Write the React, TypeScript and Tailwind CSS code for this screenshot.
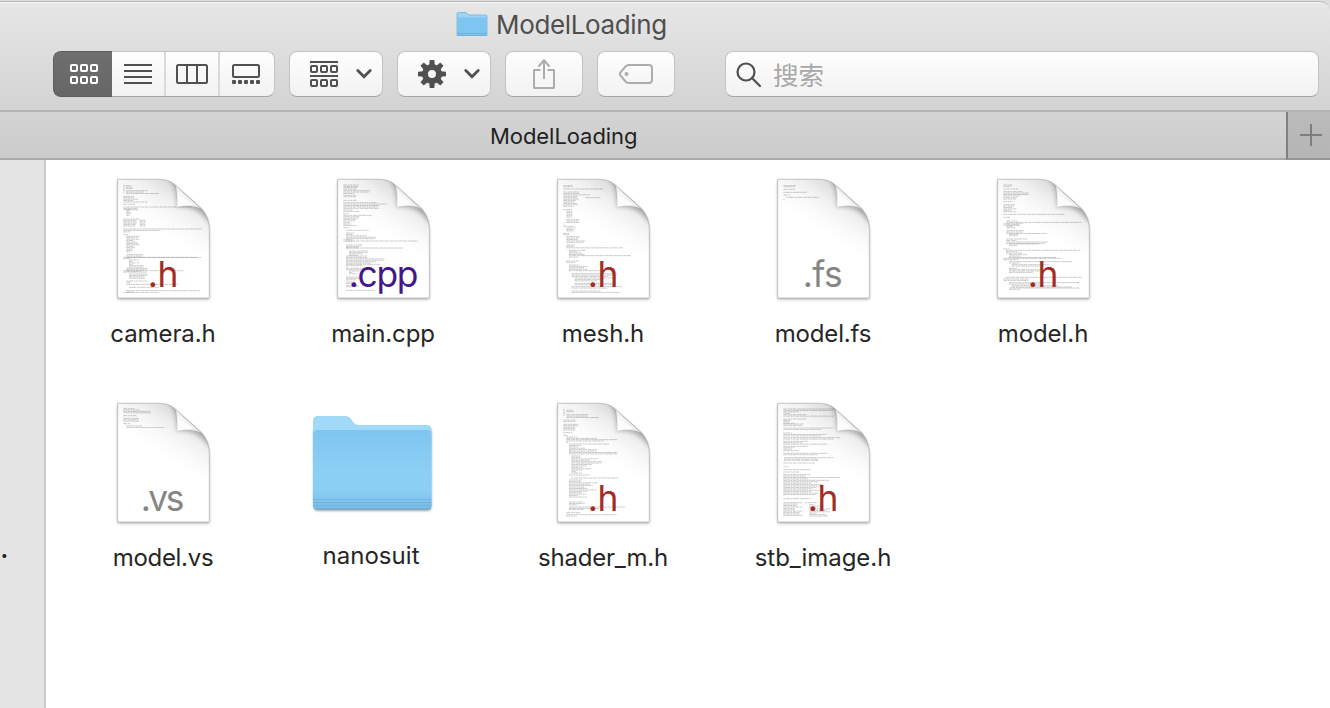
import React from "react";

type Block = [number, number, ...number[]];

interface Entry {
  name: string;
  ext?: string;
  color?: string;
  extX?: number;
  extWidth?: number;
  tracking: string;
  blocks?: Block[];
}

const RED = "#a32c26";
const GRAY = "#858585";

// Each block: first baseline, left edge, then the right edge of every row.
const camera: Block[] = [
  [46, 70, 74, 74, 74, 74, 74, 74], [47, 78, 92, 98, 98], [62, 78, 143, 131, 178],
  [79, 70, 102, 102, 114, 100, 142], [103, 70, 105], [111, 70, 275, 113, 115], [119, 79, 95, 89, 94, 94, 88],
  [147, 70, 118], [151, 70, 110, 110, 110, 108, 105], [151, 119, 136, 138, 136, 136, 136],
  [177, 70, 305, 181, 92], [194, 70, 84], [199, 79, 120, 111, 118, 102, 110, 115, 118, 103, 105, 98, 97, 92],
  [254, 79, 131, 128, 303], [262, 70, 290, 94], [270, 87, 117, 97, 118, 98, 131, 131],
  [295, 79, 143, 140, 124], [302, 70, 250, 140], [312, 87, 144, 141, 133, 135], [333, 79, 140, 92], [343, 79, 235], [352, 87, 178],
  [362, 79, 300, 103], [368, 70, 178],
];
const mainCpp: Block[] = [
  [45, 70, 116, 115], [53, 70, 112, 111], [62, 70, 150, 148, 103], [76, 70, 109, 108], [91, 70, 110],
  [98, 70, 170, 203, 178, 173, 178], [120, 70, 97, 117], [131, 70, 85], [136, 70, 157, 118, 115, 108, 104], [158, 70, 89, 94, 110], [173, 70, 89],
  [181, 78, 146], [189, 78, 103, 98, 140, 170, 166], [209, 70, 99, 98], [213, 79, 294],
  [225, 78, 127, 121, 116], [234, 78, 250], [243, 87, 144, 142, 128, 112], [258, 78, 140, 142, 194, 191, 167, 152],
  [283, 78, 184, 127], [295, 78, 140, 136], [303, 87, 118, 97, 113], [321, 78, 120, 123, 108], [336, 78, 105, 100], [346, 78, 116, 112], [361, 78, 165],
];
const mesh: Block[] = [
  [46, 70, 99, 98], [57, 70, 190], [66, 70, 118, 117, 149], [79, 70, 112, 113, 116, 107, 102, 112, 112, 100],
  [83, 136, 181], [119, 70, 99], [124, 79, 97, 96, 99], [137, 79, 96, 96], [149, 79, 119, 116, 119], [162, 70, 74],
  [169, 70, 102], [174, 79, 109, 101, 103], [190, 70, 89, 88], [200, 79, 119, 116, 112, 137, 132], [225, 79, 104, 103, 249],
  [241, 87, 138, 112], [249, 87, 125, 134], [257, 87, 272, 116], [273, 79, 116, 106], [285, 87, 117, 142, 132, 142],
  [302, 87, 178], [311, 95, 230, 230, 204], [324, 104, 231, 190, 170], [340, 104, 228, 222], [350, 95, 245, 202], [363, 95, 181, 241],
];
const modelFs: Block[] = [[46, 70, 107], [50, 70, 107], [58, 70, 105], [67, 70, 140], [75, 70, 91], [82, 79, 176], [88, 70, 74]];
const modelH: Block[] = [
  [45, 70, 98, 95], [57, 70, 115], [65, 70, 129, 146, 147, 120], [83, 70, 110, 108], [95, 70, 97], [104, 70, 104, 102, 98, 109, 95, 109],
  [133, 70, 255], [142, 70, 92], [153, 79, 112, 304], [161, 70, 129, 120], [165, 79, 118, 98, 109], [182, 79, 134, 129, 200], [193, 87, 116, 115],
  [207, 79, 144, 109], [216, 79, 202, 193], [222, 87, 178, 112], [237, 70, 87], [241, 78, 300, 112, 128], [254, 87, 141, 121, 230],
  [265, 70, 245, 116], [275, 87, 277, 118], [284, 95, 208, 180], [295, 87, 112, 187], [303, 87, 180, 160],
  [322, 78, 305], [327, 70, 148, 145], [338, 87, 300, 185], [347, 95, 235, 275], [354, 87, 300, 120],
];
const modelVs: Block[] = [[44, 70, 104], [48, 70, 121, 151, 153], [65, 70, 109], [73, 70, 115, 116, 117], [89, 70, 91], [96, 79, 126], [101, 79, 194]];
const shader: Block[] = [
  [46, 70, 74, 74, 74, 74, 74], [49, 79, 98, 102], [62, 79, 145, 141, 176], [78, 70, 109, 106], [91, 70, 115, 114, 105, 104, 106], [116, 70, 99], [124, 70, 84],
  [129, 79, 111, 170], [137, 79, 231], [141, 79, 192, 85], [150, 87, 207, 124, 114, 136, 170, 170, 232, 231], [186, 94, 124, 120, 174, 150, 188, 183, 155, 140, 125, 154, 126, 108, 126],
  [243, 87, 149], [252, 94, 235], [258, 87, 125, 122, 174, 151, 160, 133, 142, 171, 143, 125, 138, 115, 140],
  [324, 87, 128, 136, 113], [339, 87, 255, 178], [346, 87, 130], [356, 79, 122], [362, 79, 230], [366, 79, 110],
];
const stb: Block[] = [
  [45, 70, 225, 218, 116], [58, 70, 90, 140, 220], [75, 70, 138, 92, 88, 104], [90, 70, 131, 128], [102, 70, 218, 184],
  [117, 70, 95, 200, 184], [131, 70, 241, 220], [142, 70, 143, 129, 204], [157, 70, 145, 102, 95, 115], [178, 70, 204, 174],
  [191, 72, 220, 174], [199, 72, 176], [207, 70, 165], [218, 70, 85], [227, 70, 151], [234, 70, 117],
  [242, 70, 151, 137, 242, 143, 207, 176, 153, 187, 186, 170, 158, 185, 153, 176, 168], [314, 70, 155],
  [326, 70, 127, 113, 110, 128, 104, 106, 128, 119, 120, 127], [326, 135, 172], [332, 148, 164, 190, 166, 214, 200, 212, 170, 200, 204],
];

const rowOne: Entry[] = [
  { name: "camera.h", ext: ".h", color: RED, extX: 143, extWidth: 92, tracking: "tracking-[-0.08px]", blocks: camera },
  { name: "main.cpp", ext: ".cpp", color: "#431787", extX: 86, extWidth: 209, tracking: "tracking-[-0.1px]", blocks: mainCpp },
  { name: "mesh.h", ext: ".h", color: RED, extX: 143, extWidth: 92, tracking: "tracking-[-0.1px]", blocks: mesh },
  { name: "model.fs", ext: ".fs", color: GRAY, extX: 128, extWidth: 120, tracking: "tracking-[-0.15px]", blocks: modelFs },
  { name: "model.h", ext: ".h", color: RED, extX: 143, extWidth: 92, tracking: "tracking-[-0.05px]", blocks: modelH },
];
const rowTwo: Entry[] = [
  { name: "model.vs", ext: ".vs", color: GRAY, extX: 122, extWidth: 131, tracking: "tracking-[-0.3px]", blocks: modelVs },
  { name: "nanosuit", tracking: "tracking-[0.05px]" },
  { name: "shader_m.h", ext: ".h", color: RED, extX: 143, extWidth: 92, tracking: "tracking-[-0.2px]", blocks: shader },
  { name: "stb_image.h", ext: ".h", color: RED, extX: 143, extWidth: 92, tracking: "tracking-[-0.05px]", blocks: stb },
];

const SHEET = "M53 28H178C204 28 218 38 232 51L298 110C316 126 328 148 328 182V384H53Z";

function DocumentIcon({ entry, id }: { entry: Entry; id: string }) {
  return (
    <svg width="96" height="128" viewBox="48 24 288 384" className="block overflow-visible">
      <defs>
        <linearGradient id={`${id}-sheet`} gradientUnits="userSpaceOnUse" x1="262" y1="78" x2="190" y2="188">
          <stop offset="0" stopColor="#dedede" />
          <stop offset="0.3" stopColor="#efefef" />
          <stop offset="0.65" stopColor="#fafafa" />
          <stop offset="1" stopColor="#ffffff" />
        </linearGradient>
        <linearGradient id={`${id}-fold`} gradientUnits="userSpaceOnUse" x1="230" y1="112" x2="264" y2="76">
          <stop offset="0" stopColor="#ffffff" />
          <stop offset="0.7" stopColor="#fbfbfb" />
          <stop offset="1" stopColor="#e6e6e6" />
        </linearGradient>
        <filter id={`${id}-blur`} x="-20%" y="-20%" width="140%" height="140%">
          <feGaussianBlur stdDeviation="4" />
        </filter>
        <filter id={`${id}-soft`} x="-30%" y="-30%" width="160%" height="160%">
          <feGaussianBlur stdDeviation="7" />
        </filter>
        <clipPath id={`${id}-clip`}><path d={SHEET} /></clipPath>
      </defs>
      <path d={SHEET} transform="translate(0 4)" fill="#000" opacity="0.35" filter={`url(#${id}-blur)`} />
      <path d={SHEET} fill={`url(#${id}-sheet)`} stroke="#b0b0b0" strokeWidth="2" />
      <g clipPath={`url(#${id}-clip)`}>
        <path d="M200 22C224 38 231 70 230 112C265 108 300 112 331 165L331 20Z" fill="#000" opacity="0.26" filter={`url(#${id}-soft)`} />
      </g>
      <g stroke="#3c3c3c" strokeWidth="1.6" opacity="0.52">
        {entry.blocks?.map(([y, x, ...ends], b) =>
          ends.map((end, i) => (
            <line key={`${b}-${i}`} x1={x} x2={end} y1={y + i * 4.25} y2={y + i * 4.25}
              strokeDasharray={(b + i) % 2 ? "7 1.5 12 2 4 1" : "11 2 5 1 8 1.5"} />
          )),
        )}
      </g>
      <path d="M227 47C232 62 232 86 231 111C257 106 281 105 303 116Z" fill={`url(#${id}-fold)`} />
      <path d="M231 60C232 80 232 92 231 111C252 107 272 106 290 109" fill="none" stroke="#cfcfcf" strokeWidth="1.2" />
      <text x={entry.extX} y="350" fill={entry.color} fontSize="106" textLength={entry.extWidth} lengthAdjust="spacing"
        className="font-[Inter,sans-serif] font-normal">{entry.ext}</text>
    </svg>
  );
}

function FolderIcon() {
  return (
    <svg width="124" height="102" viewBox="0 0 124 102" className="block overflow-visible">
      <defs>
        <linearGradient id="folder-front" x1="0" y1="0" x2="0" y2="1">
          <stop offset="0" stopColor="#7ec5f1" /><stop offset="0.55" stopColor="#8dd0f6" />
          <stop offset="0.75" stopColor="#8ccff5" /><stop offset="1" stopColor="#78bce6" />
        </linearGradient>
        <filter id="folder-shadow" x="-10%" y="-10%" width="120%" height="125%"><feGaussianBlur stdDeviation="1.2" /></filter>
      </defs>
      <rect x="2.5" y="12" width="118" height="84" rx="4" fill="#000" opacity="0.35" filter="url(#folder-shadow)" />
      <path d="M2 90V6Q2 1 7 1H34Q38 1 40 4L43 8Q45 10 48 10H115.500Q120.500 10 120.500 15V90Z" fill="#a1d9f8" />
      <path d="M2 90V20Q2 15 7 15H115.500Q120.500 15 120.500 20V90Q120.500 94 116.500 94H6Q2 94 2 90Z" fill="url(#folder-front)" />
      <path d="M2 84.500H120.500M2 87.500H120.500M2 90.500H120.500" stroke="#65acd8" strokeWidth="1" opacity="0.6" />
      <path d="M3 92.500Q4 94 6 94H116.500Q119 94 120 92.500" fill="none" stroke="#62a6d0" strokeWidth="1" />
    </svg>
  );
}

function FileCell({ entry, id }: { entry: Entry; id: string }) {
  const folder = !entry.ext;
  return (
    <div className="flex h-[224px] w-[220px] flex-col items-center">
      {folder ? (
        <div className="mr-[20px] h-[138px] pt-[13px]"><FolderIcon /></div>
      ) : (
        <div className="h-[140px] pl-[2px]"><DocumentIcon entry={entry} id={id} /></div>
      )}
      <div className={`text-[24px] leading-[32px] whitespace-nowrap text-[#262626] ${entry.tracking} ${folder ? "mr-[24px]" : ""}`}>{entry.name}</div>
    </div>
  );
}

const BUTTON = "flex h-[46px] items-center rounded-[8px] border border-[#c3c3c3] border-b-[#a5a5a5] bg-linear-to-b from-[#fefefe] to-[#f2f2f2]";

function Squares({ y, hollow }: { y: number; hollow: string }) {
  return <>{[0, 10, 20].map((x) => <rect key={x} x={x + 1} y={y + 1} width="6" height="6" rx="1" fill="none" stroke={hollow} strokeWidth="2" />)}</>;
}

function Chevron() {
  return <svg width="16" height="10" viewBox="0 0 16 10"><path d="M1.800 1.500L8 7.700L14.200 1.500" fill="none" stroke="#505050" strokeWidth="2.800" strokeLinecap="round" /></svg>;
}

function Toolbar() {
  return (
    <div className="flex h-[46px] pl-[53px]">
      <div className="flex h-[46px] w-[59px] shrink-0 items-center justify-center rounded-l-[8px] border border-r-0 border-[#5e5e5e] bg-linear-to-b from-[#6f6f6f] to-[#666666] pl-[2px]">
        <svg width="28" height="20"><Squares y={0} hollow="#fff" /><Squares y={12} hollow="#fff" /></svg>
      </div>
      <div className="flex h-[46px] w-[163px] shrink-0 overflow-hidden rounded-r-[8px] border border-l-0 border-[#c3c3c3] border-b-[#a5a5a5] bg-linear-to-b from-[#fefefe] to-[#f2f2f2]">
        <div className="flex w-[54px] shrink-0 items-center justify-center border-r-2 border-[#dadada]">
          <svg width="28" height="20"><path d="M0 1H28M0 7H28M0 13H28M0 19H28" stroke="#505050" strokeWidth="2" /></svg>
        </div>
        <div className="flex w-[54px] shrink-0 items-center justify-center border-r-2 border-[#dadada]">
          <svg width="32" height="20"><rect x="1" y="1" width="30" height="18" rx="1.500" fill="none" stroke="#505050" strokeWidth="2" /><path d="M11 1V19M21 1V19" stroke="#505050" strokeWidth="2" /></svg>
        </div>
        <div className="flex w-[52px] shrink-0 items-center justify-center">
          <svg width="28" height="20"><rect x="1" y="1" width="26" height="12" rx="1.500" fill="none" stroke="#505050" strokeWidth="2" />
            {[0, 6, 12, 18, 24].map((x) => <rect key={x} x={x} y="16" width="4" height="4" rx="1" fill="#505050" />)}
          </svg>
        </div>
      </div>
      <div className={`${BUTTON} ml-[14px] w-[94px] shrink-0 justify-between pr-[10px] pl-[20px]`}>
        <svg width="28" height="26"><path d="M0 1H28M0 15H28" stroke="#505050" strokeWidth="2" /><Squares y={4} hollow="#505050" /><Squares y={18} hollow="#505050" /></svg>
        <Chevron />
      </div>
      <div className={`${BUTTON} ml-[14px] w-[94px] shrink-0 justify-between pr-[10px] pl-[20px]`}>
        <svg width="28" height="28" viewBox="-14 -14 28 28">
          <circle r="7" fill="none" stroke="#505050" strokeWidth="6" />
          {[0, 45, 90, 135, 180, 225, 270, 315].map((a) => <path key={a} d="M-2.800 -8.500L-2.300 -14H2.300L2.800 -8.500Z" fill="#505050" transform={`rotate(${a})`} />)}
        </svg>
        <Chevron />
      </div>
      <div className={`${BUTTON} ml-[14px] w-[78px] shrink-0 justify-center`}>
        <svg width="24" height="32" viewBox="0 0 24 32" fill="none" stroke="#acacac" strokeWidth="2">
          <path d="M8.500 12H2.500Q2 12 2 12.500V29.500Q2 30 2.500 30H21.500Q22 30 22 29.500V12.500Q22 12 21.500 12H15.500M12 21V2M6.500 8.500L12 2.300L17.500 8.500" />
        </svg>
      </div>
      <div className={`${BUTTON} ml-[14px] w-[78px] shrink-0 justify-center`}>
        <svg width="34" height="20" viewBox="0 0 34 20" fill="none" stroke="#acacac" strokeWidth="2">
          <path d="M10 1H30Q33 1 33 4V16Q33 19 30 19H10Q8 19 6.500 17.500L1.700 12Q.3 10 1.700 8L6.500 2.500Q8 1 10 1Z" /><circle cx="7.500" cy="10" r="2" fill="#acacac" stroke="none" />
        </svg>
      </div>
      <div className={`${BUTTON} ml-[50px] w-[594px] shrink-0 pl-[10px]`}>
        <svg width="26" height="26" viewBox="0 0 26 26" fill="none" stroke="#4f4f4f" strokeWidth="2.200" strokeLinecap="round" className="mt-[2px]"><circle cx="10" cy="10" r="8.500" /><path d="M16.200 16.200L24 24" /></svg>
        <span className="ml-[11px] font-['Noto_Sans_CJK_SC',sans-serif] text-[25.500px] leading-[40px] text-[#a8a8a8]">搜索</span>
      </div>
    </div>
  );
}

export default function App() {
  return (
    <div className="flex h-[708px] w-[1330px] flex-col overflow-hidden bg-white font-[Inter,sans-serif]">
      <header className="h-[112px] shrink-0 bg-[#dedede] pt-px">
        <div className="flex h-[111px] flex-col rounded-tr-[10px] border-t border-b-2 border-t-[#b7b7b7] border-b-[#b4b4b4] bg-linear-to-b from-[#e7e7e7] to-[#d3d3d3] shadow-[inset_0_1px_0_#f5f5f5]">
          <div className="flex h-[49px] shrink-0 items-start pl-[456px]">
            <svg width="32" height="26" viewBox="0 0 32 26" className="mt-[10px]">
              <path d="M1 23.500V1.500Q1 .5 2 .5H10L13 3H30Q31 3 31 4V23.500Z" fill="#9bd4f6" stroke="#71aed5" strokeWidth=".7" />
              <path d="M1 5.500H31V22.500Q31 23.500 30 23.500H2Q1 23.500 1 22.500Z" fill="#7fc5f1" /><path d="M1 21.500H31M1 23.500H31" stroke="#6cb0db" strokeWidth="1" />
            </svg>
            <span className="mt-[7px] ml-[8px] text-[26px] leading-[32px] tracking-[-0.35px] text-[#4f4f4f]">ModelLoading</span>
          </div>
          <Toolbar />
        </div>
      </header>
      <div className="flex h-[48px] shrink-0 border-b-2 border-[#a9a9a9] bg-linear-to-b from-[#d4d4d4] to-[#cbcbcb]">
        <div className="flex w-[1286px] items-center pt-[2px] pl-[490px] text-[22px] leading-[30px] tracking-[-0.06px] text-[#1f1f1f]">ModelLoading</div>
        <div className="-mb-[2px] flex h-[48px] w-[44px] items-center border-b-2 border-l-2 border-b-[#979797] border-l-[#808080] bg-linear-to-b from-[#bbbbbb] to-[#b5b5b5] pl-[12px]">
          <svg width="22" height="22"><path d="M0 11H22M11 0V22" stroke="#7e7e7e" strokeWidth="2" /></svg>
        </div>
      </div>
      <div className="flex min-h-0 flex-1">
        <aside className="w-[46px] shrink-0 border-r-2 border-[#cbcbcb] bg-[#e5e5e5] pt-[371px]">
          <div className="text-[30px] leading-[32px] text-[#262626]">.</div>
        </aside>
        <main className="flex flex-1 flex-col bg-white pt-[18px] pl-[7px]">
          <div className="flex">{rowOne.map((e, i) => <FileCell key={e.name} entry={e} id={`top-${i}`} />)}</div>
          <div className="flex">{rowTwo.map((e, i) => <FileCell key={e.name} entry={e} id={`bottom-${i}`} />)}</div>
        </main>
      </div>
    </div>
  );
}
